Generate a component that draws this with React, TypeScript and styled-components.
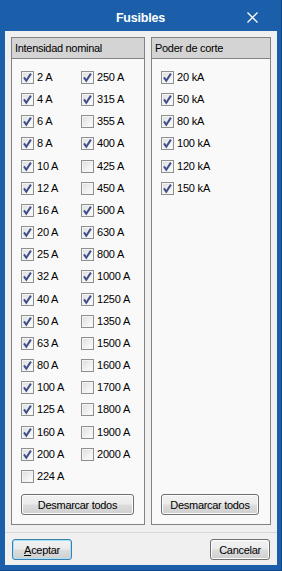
import React from "react";
import styled, { createGlobalStyle } from "styled-components";

const Global = createGlobalStyle`
  html, body { margin: 0; padding: 0; }
  body { font-family: "Liberation Sans", Arial, sans-serif; }
`;

const Window = styled.div`
  width: 282px;
  height: 571px;
  box-sizing: border-box;
  background: #1b5faa;
  border-right: 1px solid #0f4583;
  border-bottom: 1px solid #0f4583;
  display: flex;
  flex-direction: column;
`;

const TitleBar = styled.div`
  height: 31px;
  position: relative;
  display: flex;
  align-items: center;
  justify-content: center;
  flex-shrink: 0;
`;

const Title = styled.div`
  color: #fff;
  font-weight: bold;
  font-size: 12.5px;
  letter-spacing: -0.2px;
  margin-top: 5px;
`;

const Close = styled.div`
  position: absolute;
  right: 23px;
  top: 12px;
  width: 11px;
  height: 11px;
  display: flex;
`;

const Client = styled.div`
  flex: 1;
  margin: 0 4px 5px 5px;
  background: #f0f0f0;
  display: flex;
  flex-direction: column;
`;

const Panels = styled.div`
  display: flex;
  gap: 6px;
  padding: 6px 6px 0 6px;
  height: 488px;
`;

const Panel = styled.div<{ $w: number }>`
  width: ${(p) => p.$w}px;
  box-sizing: border-box;
  border: 1px solid #828282;
  background: #f9f9f9;
  display: flex;
  flex-direction: column;
`;

const Header = styled.div`
  height: 20px;
  line-height: 20px;
  background: #d4d4d4;
  border-bottom: 1px solid #828282;
  padding-left: 3px;
  font-size: 11px;
  letter-spacing: -0.3px;
  color: #000;
`;

const Body = styled.div`
  flex: 1;
  display: flex;
  padding: 12px 0 0 9px;
`;

const Column = styled.div<{ $w?: number }>`
  display: flex;
  flex-direction: column;
  width: ${(p) => (p.$w ? `${p.$w}px` : "auto")};
`;

const Item = styled.label`
  display: flex;
  gap: 3px;
  height: 22.17px;
  align-items: flex-start;
  font-size: 11px;
  line-height: 13px;
  letter-spacing: -0.2px;
  color: #000;
`;

const Box = styled.span`
  width: 13px;
  height: 13px;
  box-sizing: border-box;
  border: 1px solid #8e8f8f;
  background: linear-gradient(135deg, #dcdcdc 0%, #f2f2f2 60%, #fdfdfd 100%);
  box-shadow: inset 0 0 0 1px #f4f4f4;
  display: flex;
  flex-shrink: 0;
`;

const PanelFooter = styled.div<{ $r: number }>`
  display: flex;
  padding: 0 ${(p) => p.$r}px 9px 9px;
`;

const Button = styled.button<{ $default?: boolean; $w?: number }>`
  height: 21px;
  width: ${(p) => (p.$w ? `${p.$w}px` : "100%")};
  box-sizing: border-box;
  border-radius: 3px;
  border: 1px solid ${(p) => (p.$default ? "#3c7fb1" : "#707070")};
  box-shadow: inset 0 0 0 1px ${(p) => (p.$default ? "#a6e0f9" : "#fcfcfc")};
  background: linear-gradient(#f2f2f2 0%, #ebebeb 48%, #dddddd 52%, #cfcfcf 100%);
  font-family: "Liberation Sans", Arial, sans-serif;
  font-size: 11px;
  letter-spacing: -0.3px;
  color: #000;
  padding: 0;
`;

const Separator = styled.div`
  margin-top: 7px;
  height: 1px;
  background: #d8d8d8;
`;

const Footer = styled.div`
  display: flex;
  justify-content: space-between;
  padding: 6px 7px 5px 7px;
`;

const Check = () => (
  <svg width="11" height="11" viewBox="0 0 11 11">
    <path d="M2 5.4 L4.3 8.8 L8.9 1.6" fill="none" stroke="#3f4f8c" strokeWidth="2" strokeLinejoin="miter" />
  </svg>
);

type C = [string, boolean];

const leftCol: C[] = [
  ["2 A", true], ["4 A", true], ["6 A", true], ["8 A", true], ["10 A", true],
  ["12 A", true], ["16 A", true], ["20 A", true], ["25 A", true], ["32 A", true],
  ["40 A", true], ["50 A", true], ["63 A", true], ["80 A", true], ["100 A", true],
  ["125 A", true], ["160 A", true], ["200 A", true], ["224 A", false],
];
const rightCol: C[] = [
  ["250 A", true], ["315 A", true], ["355 A", false], ["400 A", true], ["425 A", false],
  ["450 A", false], ["500 A", true], ["630 A", true], ["800 A", true], ["1000 A", true],
  ["1250 A", true], ["1350 A", false], ["1500 A", false], ["1600 A", false], ["1700 A", false],
  ["1800 A", false], ["1900 A", false], ["2000 A", false],
];
const corte: C[] = [
  ["20 kA", true], ["50 kA", true], ["80 kA", true], ["100 kA", true], ["120 kA", true], ["150 kA", true],
];

const List = ({ items, w }: { items: C[]; w?: number }) => (
  <Column $w={w}>
    {items.map(([t, c]) => (
      <Item key={t}>
        <Box>{c && <Check />}</Box>
        {t}
      </Item>
    ))}
  </Column>
);

export default function App() {
  return (
    <>
      <Global />
      <Window>
        <TitleBar>
          <Title>Fusibles</Title>
          <Close>
            <svg width="11" height="11" viewBox="0 0 11 11">
              <path d="M0.5 0.5 L10.5 10.5 M10.5 0.5 L0.5 10.5" stroke="#fff" strokeWidth="1.3" />
            </svg>
          </Close>
        </TitleBar>
        <Client>
          <Panels>
            <Panel $w={134}>
              <Header>Intensidad nominal</Header>
              <Body>
                <List items={leftCol} w={60} />
                <List items={rightCol} />
              </Body>
              <PanelFooter $r={10}>
                <Button>Desmarcar todos</Button>
              </PanelFooter>
            </Panel>
            <Panel $w={120}>
              <Header>Poder de corte</Header>
              <Body>
                <List items={corte} />
              </Body>
              <PanelFooter $r={11}>
                <Button>Desmarcar todos</Button>
              </PanelFooter>
            </Panel>
          </Panels>
          <Separator />
          <Footer>
            <Button $default $w={60}>
              <u>A</u>ceptar
            </Button>
            <Button $w={60}>Cancelar</Button>
          </Footer>
        </Client>
      </Window>
    </>
  );
}
